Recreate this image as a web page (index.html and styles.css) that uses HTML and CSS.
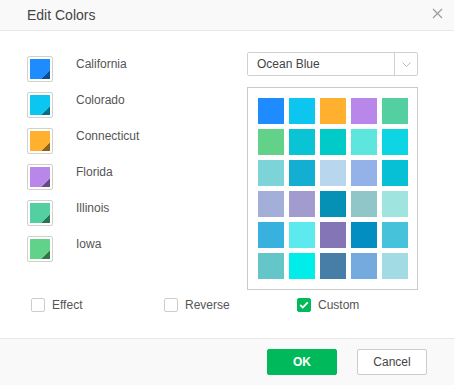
FILE: index.html
```html
<!DOCTYPE html>
<html lang="en">
<head>
  <meta charset="UTF-8" />
  <title>Edit Colors</title>
  <link rel="stylesheet" href="styles.css">
</head>
<body>

  <div class="dialog">
    <div class="dialog-header">
      <span class="dialog-title">Edit Colors</span>
      <span class="dialog-close">
        <svg width="11" height="11" viewBox="0 0 11 11"><path d="M1 1L10 10M10 1L1 10" stroke="#999" stroke-width="1.1" fill="none"/></svg>
      </span>
    </div>

    <div class="dialog-body">
      <div class="editor">
        <div class="series-list">
          <div class="series"><span class="swatch"><i style="background-color:#1e8cff"></i></span><span class="series-name">California</span></div>
          <div class="series"><span class="swatch"><i style="background-color:#0dc6ef"></i></span><span class="series-name">Colorado</span></div>
          <div class="series"><span class="swatch"><i style="background-color:#ffb02e"></i></span><span class="series-name">Connecticut</span></div>
          <div class="series"><span class="swatch"><i style="background-color:#b986ea"></i></span><span class="series-name">Florida</span></div>
          <div class="series"><span class="swatch"><i style="background-color:#53cfa1"></i></span><span class="series-name">Illinois</span></div>
          <div class="series"><span class="swatch"><i style="background-color:#63d289"></i></span><span class="series-name">Iowa</span></div>
        </div>

        <div class="theme-panel">
          <div class="select">
            <span class="select-value">Ocean Blue</span>
            <span class="select-arrow">
              <svg width="9" height="5" viewBox="0 0 9 5"><path d="M0.5 0.5L4.5 4.5L8.5 0.5" stroke="#bbb" stroke-width="1" fill="none"/></svg>
            </span>
          </div>
          <div class="palette" id="palette"></div>
        </div>
      </div>

      <div class="options">
        <label class="option"><span class="check"></span>Effect</label>
        <label class="option"><span class="check"></span>Reverse</label>
        <label class="option"><span class="check checked">
          <svg width="10" height="8" viewBox="0 0 10 8"><path d="M1.2 4L3.8 6.4L8.8 1.4" stroke="#fff" stroke-width="1.8" fill="none"/></svg>
        </span>Custom</label>
      </div>
    </div>

    <div class="dialog-footer">
      <button class="btn btn-ok">OK</button>
      <button class="btn btn-cancel">Cancel</button>
    </div>
  </div>

  <script>
    const colors = [
      "#1e8cff", "#0dc6ef", "#ffb02e", "#b986ea", "#53cfa1",
      "#63d289", "#0ac3d5", "#00cbc8", "#5ce6dd", "#0dd5e3",
      "#7cd3d8", "#14aed3", "#b8d6ee", "#94b2e8", "#08c0d6",
      "#a3afd9", "#a19ccd", "#0590b6", "#91c6c9", "#9fe4df",
      "#38b1de", "#5deaee", "#8475b7", "#028ec1", "#46c2db",
      "#65c6ca", "#00edea", "#467ea8", "#75aade", "#a3dbe4"
    ];

    document.getElementById("palette").innerHTML = colors
      .map((c) => `<span class="chip" style="background-color:${c}"></span>`)
      .join("");
  </script>

</body>
</html>
```

FILE: styles.css
```css
body {
  margin: 0;
  font-family: "Liberation Sans", Arial, sans-serif;
  font-size: 12px;
  color: #555;
  background-color: #fff;
}

.dialog {
  width: 454px;
  height: 385px;
  display: flex;
  flex-direction: column;
}

.dialog-header {
  height: 30px;
  padding: 0 11px 0 27px;
  display: flex;
  justify-content: space-between;
  align-items: center;
  background-color: #f9f9f9;
  border-bottom: 1px solid #e8e8e8;
}

.dialog-title {
  font-size: 14px;
  line-height: 27px;
  color: #444;
}

.dialog-close {
  display: flex;
  margin-top: -4px;
}

.dialog-body {
  flex: 1;
  padding: 21px 0 0 0;
}

.editor {
  display: flex;
  padding-left: 27px;
}

.series-list {
  width: 220px;
  margin-top: 4px;
  display: flex;
  flex-direction: column;
  gap: 10px;
}

.series {
  display: flex;
  align-items: flex-start;
}

.swatch {
  width: 20px;
  height: 20px;
  padding: 2px;
  border: 1px solid #d3d1cb;
  border-radius: 2px;
}

.swatch i {
  display: block;
  width: 20px;
  height: 20px;
  background-image: linear-gradient(135deg, transparent 79%, rgba(0, 0, 0, 0.45) 79%);
}

.series-name {
  margin-left: 23px;
  padding-top: 1px;
  line-height: 14px;
  color: #555;
}

.theme-panel {
  width: 171px;
}

.select {
  height: 22px;
  display: flex;
  border: 1px solid #d0d0cc;
  border-radius: 2px;
}

.select-value {
  flex: 1;
  padding-left: 9px;
  line-height: 22px;
  color: #444;
}

.select-arrow {
  width: 22px;
  display: flex;
  align-items: center;
  justify-content: center;
  border-left: 1px solid #d0d0cc;
}

.palette {
  margin-top: 11px;
  padding: 10px;
  border: 1px solid #cbcbc5;
  display: grid;
  grid-template-columns: repeat(5, 26px);
  grid-auto-rows: 26px;
  gap: 5px;
}

.options {
  display: flex;
  margin-top: 8px;
  padding-left: 31px;
}

.option {
  width: 133px;
  display: flex;
  align-items: center;
  line-height: 14px;
  color: #555;
}

.check {
  width: 12px;
  height: 12px;
  margin-right: 7px;
  border: 1px solid #ccc;
  border-radius: 2px;
  display: flex;
  align-items: center;
  justify-content: center;
}

.check.checked {
  background-color: #00b95a;
  border-color: #00b95a;
}

.dialog-footer {
  height: 46px;
  padding-right: 27px;
  display: flex;
  justify-content: flex-end;
  align-items: center;
  gap: 20px;
  background-color: #f9f9f9;
  border-top: 1px solid #e8e8e8;
}

.btn {
  width: 70px;
  height: 26px;
  font-family: "Liberation Sans", Arial, sans-serif;
  font-size: 12px;
  border-radius: 2px;
  cursor: pointer;
}

.btn-ok {
  background-color: #00b95a;
  border: 1px solid #00b95a;
  color: #fff;
  font-weight: bold;
}

.btn-cancel {
  background-color: #fff;
  border: 1px solid #ccc;
  color: #444;
}
```
